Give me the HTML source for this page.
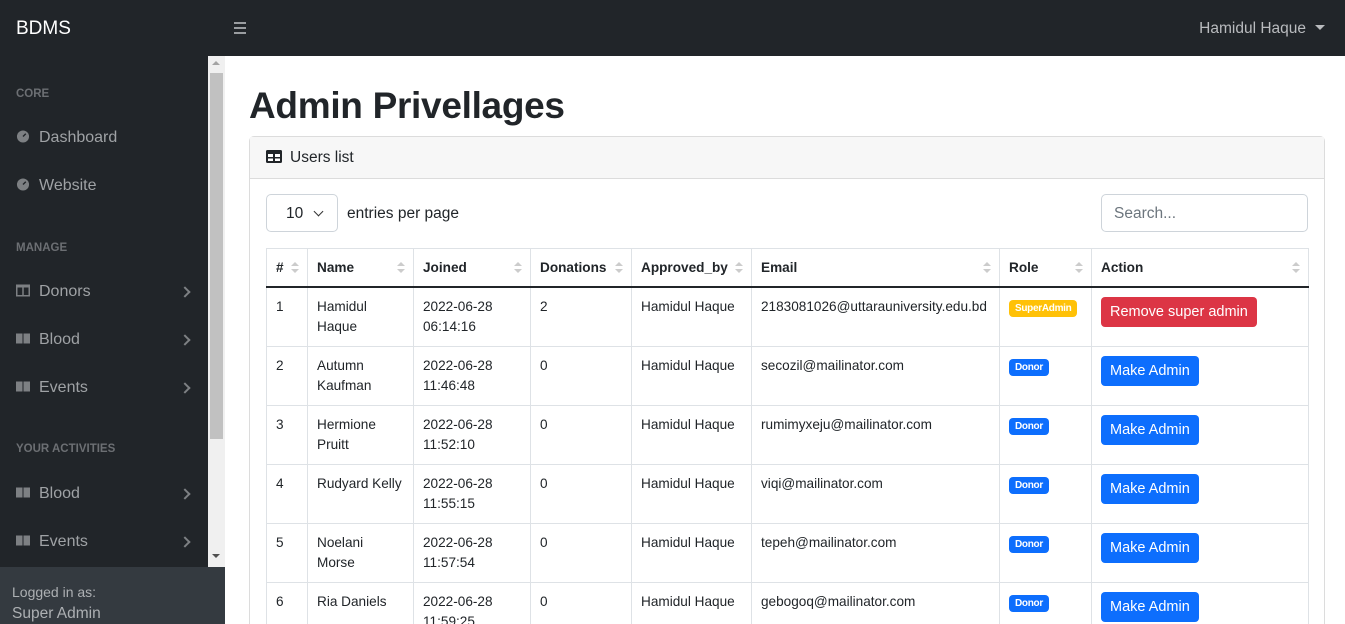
<!DOCTYPE html>
<html><head><meta charset="utf-8"><style>
*{box-sizing:border-box;margin:0;padding:0}
html,body{width:1345px;height:624px;overflow:hidden}
body{font-family:"Liberation Sans",sans-serif;background:#fff;color:#212529;position:relative}
.top{position:absolute;left:0;top:0;width:1345px;height:56px;background:#212529}
.brand{position:absolute;left:16px;top:18px;color:#fff;font-size:19px}
.burger{position:absolute;left:234px;top:22px;width:12px}
.burger i{display:block;height:2px;background:#9a9da0;margin-bottom:3px}
.user{position:absolute;right:20px;top:20px;color:#b9bbbe;font-size:15.5px}
.user:after{content:"";display:inline-block;margin-left:9px;vertical-align:3px;border-left:5px solid transparent;border-right:5px solid transparent;border-top:5px solid #b9bbbe}
.side{position:absolute;left:0;top:56px;width:208px;height:511px;background:#212529}
.sb{position:absolute;left:208px;top:56px;width:17px;height:511px;background:#f0f0f0}
.thumb{position:absolute;left:210px;top:73px;width:13px;height:366px;background:#c1c1c1}
.head{position:absolute;left:16px;font-size:11.5px;font-weight:bold;color:#6c6f73}
.nav{position:absolute;left:16px;color:#9fa2a5;font-size:16px}
.nav .ic{display:inline-block;width:14px;height:13px;margin-right:9px;vertical-align:-1px}
.chev{position:absolute;left:181px;width:8px;height:8px;border-right:2px solid #7d8083;border-top:2px solid #7d8083;transform:rotate(45deg)}
.foot{position:absolute;left:0;top:567px;width:225px;height:57px;background:#343a40;color:#adb0b3;padding:14px 12px;font-size:14px;line-height:22px}
.foot div+div{font-size:15.5px}
h1{position:absolute;left:249px;top:85px;font-size:37px;font-weight:bold;letter-spacing:-.3px}
.card{position:absolute;left:249px;top:136px;width:1076px;height:500px;border:1px solid #dcdcdc;border-radius:5px}
.ch{height:42px;background:#f7f7f7;border-bottom:1px solid #dcdcdc;padding:12px 16px;font-size:15.5px}
.sel{position:absolute;left:266px;top:194px;width:72px;height:38px;border:1px solid #ced4da;border-radius:5px;font-size:15.5px;padding:10px 0 0 19px}
.sel:after{content:"";position:absolute;left:48px;top:13px;width:6px;height:6px;border-right:1.5px solid #333;border-bottom:1.5px solid #333;transform:rotate(45deg)}
.epp{position:absolute;left:347px;top:205px;font-size:15.5px}
.search{position:absolute;left:1101px;top:194px;width:207px;height:38px;border:1px solid #ced4da;border-radius:5px;font-size:15.5px;color:#6c757d;padding:10px 12px}
table{position:absolute;left:266px;top:248px;width:1042px;border-collapse:collapse;table-layout:fixed;font-size:13.6px}
th,td{border:1px solid #dee2e6;text-align:left;vertical-align:top;padding:8px 9px;line-height:21px;white-space:nowrap;overflow:hidden}
td:nth-child(2),td:nth-child(3){white-space:normal}
th{height:38px;font-weight:bold;border-bottom:2px solid #212529;padding-top:8px;position:relative}
th:after{content:"";position:absolute;right:8px;top:13px;width:0;height:0;border-left:4px solid transparent;border-right:4px solid transparent;border-bottom:4px solid #ccc}
th:before{content:"";position:absolute;right:8px;top:20px;width:0;height:0;border-left:4px solid transparent;border-right:4px solid transparent;border-top:4px solid #ccc}
td{height:59px;padding:9px 9px 0;line-height:20px}
.b{display:inline-block;font-size:10px;font-weight:bold;color:#fff;border-radius:4px;padding:2px 6px;margin-top:1px;letter-spacing:-.3px;line-height:13px}
.bd{background:#0d6efd}.bs{background:#ffc107}
.btn{display:inline-block;color:#fff;font-size:14.5px;border-radius:4px;padding:6px 9px;line-height:18px;margin-top:0}
.bp{background:#0d6efd}.bx{background:#dc3545}
</style></head><body>
<div class="top"><div class="brand">BDMS</div><div class="burger"><i></i><i></i><i></i></div><div class="user">Hamidul Haque</div></div>
<div class="side">
<div class="head" style="top:32px">CORE</div>
<div class="nav" style="top:73px"><svg class="ic" viewBox="0 0 14 14"><circle cx="7" cy="7" r="6.5" fill="#7d8083"/><path d="M7 7L10 4" stroke="#212529" stroke-width="1.5"/></svg>Dashboard</div>
<div class="nav" style="top:121px"><svg class="ic" viewBox="0 0 14 14"><circle cx="7" cy="7" r="6.5" fill="#7d8083"/><path d="M7 7L10 4" stroke="#212529" stroke-width="1.5"/></svg>Website</div>
<div class="head" style="top:186px">MANAGE</div>
<div class="nav" style="top:227px"><svg class="ic" viewBox="0 0 14 12"><rect x="0.75" y="0.75" width="12.5" height="10.5" fill="none" stroke="#7d8083" stroke-width="1.5"/><rect x="0" y="0" width="14" height="3" fill="#7d8083"/><path d="M7 1v10" stroke="#7d8083" stroke-width="1.5"/></svg>Donors</div><div class="chev" style="top:232px"></div>
<div class="nav" style="top:275px"><svg class="ic" viewBox="0 0 14 12"><rect x="0" y="1" width="6.5" height="10" fill="#7d8083"/><rect x="7.5" y="1" width="6.5" height="10" fill="#7d8083"/></svg>Blood</div><div class="chev" style="top:280px"></div>
<div class="nav" style="top:323px"><svg class="ic" viewBox="0 0 14 12"><rect x="0" y="1" width="6.5" height="10" fill="#7d8083"/><rect x="7.5" y="1" width="6.5" height="10" fill="#7d8083"/></svg>Events</div><div class="chev" style="top:328px"></div>
<div class="head" style="top:387px">YOUR ACTIVITIES</div>
<div class="nav" style="top:429px"><svg class="ic" viewBox="0 0 14 12"><rect x="0" y="1" width="6.5" height="10" fill="#7d8083"/><rect x="7.5" y="1" width="6.5" height="10" fill="#7d8083"/></svg>Blood</div><div class="chev" style="top:434px"></div>
<div class="nav" style="top:477px"><svg class="ic" viewBox="0 0 14 12"><rect x="0" y="1" width="6.5" height="10" fill="#7d8083"/><rect x="7.5" y="1" width="6.5" height="10" fill="#7d8083"/></svg>Events</div><div class="chev" style="top:482px"></div>
</div>
<div class="sb"></div><div class="thumb"></div>
<div style="position:absolute;left:212px;top:61px;border-left:4px solid transparent;border-right:4px solid transparent;border-bottom:4px solid #a3a3a3"></div>
<div style="position:absolute;left:212px;top:554px;border-left:4px solid transparent;border-right:4px solid transparent;border-top:4px solid #505050"></div>
<div class="foot"><div>Logged in as:</div><div>Super Admin</div></div>
<h1>Admin Privellages</h1>
<div class="card"><div class="ch"><svg width="16" height="13" viewBox="0 0 16 13" style="vertical-align:-1px;margin-right:8px"><rect width="16" height="13" rx="1.5" fill="#212529"/><rect x="2" y="4" width="5" height="3" fill="#fff"/><rect x="9" y="4" width="5" height="3" fill="#fff"/><rect x="2" y="8.5" width="5" height="2.5" fill="#fff"/><rect x="9" y="8.5" width="5" height="2.5" fill="#fff"/></svg>Users list</div></div>
<div class="sel">10</div><div class="epp">entries per page</div>
<div class="search">Search...</div>
<table>
<colgroup><col style="width:41px"><col style="width:106px"><col style="width:117px"><col style="width:101px"><col style="width:120px"><col style="width:248px"><col style="width:92px"><col style="width:217px"></colgroup>
<tr><th>#</th><th>Name</th><th>Joined</th><th>Donations</th><th>Approved_by</th><th>Email</th><th>Role</th><th>Action</th></tr>
<tr><td>1</td><td>Hamidul Haque</td><td>2022-06-28 06:14:16</td><td>2</td><td>Hamidul Haque</td><td>2183081026@uttarauniversity.edu.bd</td><td><span class="b bs">SuperAdmin</span></td><td><span class="btn bx">Remove super admin</span></td></tr>
<tr><td>2</td><td>Autumn Kaufman</td><td>2022-06-28 11:46:48</td><td>0</td><td>Hamidul Haque</td><td>secozil@mailinator.com</td><td><span class="b bd">Donor</span></td><td><span class="btn bp">Make Admin</span></td></tr>
<tr><td>3</td><td>Hermione Pruitt</td><td>2022-06-28 11:52:10</td><td>0</td><td>Hamidul Haque</td><td>rumimyxeju@mailinator.com</td><td><span class="b bd">Donor</span></td><td><span class="btn bp">Make Admin</span></td></tr>
<tr><td>4</td><td style="white-space:nowrap">Rudyard Kelly</td><td>2022-06-28 11:55:15</td><td>0</td><td>Hamidul Haque</td><td>viqi@mailinator.com</td><td><span class="b bd">Donor</span></td><td><span class="btn bp">Make Admin</span></td></tr>
<tr><td>5</td><td>Noelani Morse</td><td>2022-06-28 11:57:54</td><td>0</td><td>Hamidul Haque</td><td>tepeh@mailinator.com</td><td><span class="b bd">Donor</span></td><td><span class="btn bp">Make Admin</span></td></tr>
<tr><td>6</td><td style="white-space:nowrap">Ria Daniels</td><td>2022-06-28 11:59:25</td><td>0</td><td>Hamidul Haque</td><td>gebogoq@mailinator.com</td><td><span class="b bd">Donor</span></td><td><span class="btn bp">Make Admin</span></td></tr>
</table>
</body></html>
